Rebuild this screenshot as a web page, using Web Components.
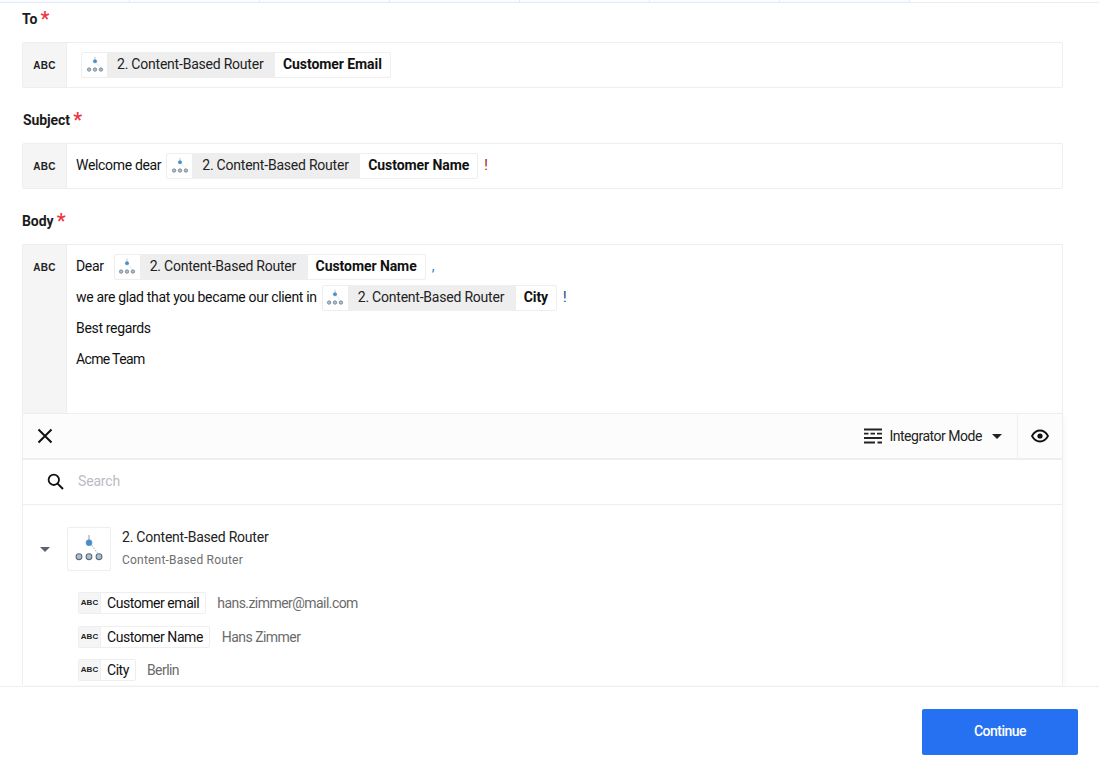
<!DOCTYPE html>
<html>
<head>
<meta charset="utf-8">
<style>
	html, body { margin: 0; padding: 0; background: #fff; }
	body { font-family: Roboto, "Liberation Sans", sans-serif; font-size: 14px; color: #111; }
</style>
</head>
<body>
<wizard-page>
	<top-strip></top-strip>
	<form-field label="To" style="--label-left:0px;--label-top:8px;--label-h:39px">
		<text-line style="padding-left:5px"><var-pill name="Customer Email"></var-pill></text-line>
	</form-field>
	<form-field label="Subject" style="--label-left:1px;--label-top:24px;--label-h:55px">
		<text-line>Welcome dear<var-pill name="Customer Name" style="margin-left:5px"></var-pill><span style="color:#a01020;margin-left:6px">!</span></text-line>
	</form-field>
	<form-field label="Body" tall style="--label-top:24px;--label-h:55px">
		<text-line>Dear<var-pill name="Customer Name" style="margin-left:10px"></var-pill><span style="color:#2a7fd0;margin-left:6px">,</span></text-line>
		<text-line>we are glad that you became our client in<var-pill name="City" style="margin-left:5px"></var-pill><span style="color:#123a80;margin-left:6px">!</span></text-line>
		<text-line>Best regards</text-line>
		<text-line style="letter-spacing:-.65px">Acme Team</text-line>
	</form-field>
	<picker-panel>
		<picker-toolbar></picker-toolbar>
		<picker-search></picker-search>
		<step-tree title="2. Content-Based Router" sub="Content-Based Router">
			<var-row name="Customer email" value="hans.zimmer@mail.com" style="--value-gap:11px"></var-row>
			<var-row name="Customer Name" value="Hans Zimmer" style="--value-gap:12px"></var-row>
			<var-row name="City" value="Berlin" style="--value-gap:11px"></var-row>
		</step-tree>
	</picker-panel>
	<wizard-footer slot="footer"></wizard-footer>
</wizard-page>

<script>
	// same drawing for the small pill icon and the big tree icon, only the size differs
	const routerSvg = (size) => `
		<svg width="${size}" height="${size}" viewBox="0 0 44 44" style="display:block;flex:none">
			<path d="M22 8V13" stroke="#bcc3ca" stroke-width="1.6" fill="none"/>
			<path d="M24.5 18L30.5 26" stroke="#c5ccd4" stroke-width="1.2" stroke-dasharray="2 1" fill="none"/>
			<circle cx="22" cy="15.7" r="3" fill="#3f8fd6" stroke="#6f8fa8" stroke-width=".7"/>
			<circle cx="12" cy="29.7" r="2.9" fill="#a9c0d3" stroke="#5f6b76" stroke-width="1.1"/>
			<circle cx="22" cy="29.7" r="2.9" fill="#a9c0d3" stroke="#5f6b76" stroke-width="1.1"/>
			<circle cx="32" cy="29.7" r="2.9" fill="#a9c0d3" stroke="#5f6b76" stroke-width="1.1"/>
		</svg>`;

	class WizardPage extends HTMLElement {
		constructor() {
			super();
			this.attachShadow({mode: "open"}).innerHTML = `
				<style>
					:host { display: flex; flex-direction: column; height: 776px; overflow: hidden; }
					.scroll { flex: 1; min-height: 0; overflow: hidden; padding: 0 36px 0 22px; }
					.foot { flex: none; }
				</style>
				<div class="top"><slot name="top"></slot></div>
				<div class="scroll"><slot></slot></div>
				<div class="foot"><slot name="footer"></slot></div>`;
			this.querySelector("top-strip").slot = "top";
		}
	}

	class TopStrip extends HTMLElement {
		constructor() {
			super();
			this.attachShadow({mode: "open"}).innerHTML = `
				<style>
					:host { display: flex; height: 3px; box-sizing: border-box; border-bottom: 1px solid #ececec; }
					i { width: 130px; height: 3px; box-sizing: border-box; background: #fbfcff; border-bottom: 1px solid #dfe9f9; border-right: 1px solid #e3ebf7; }
				</style>
				${"<i></i>".repeat(7)}`;
		}
	}

	class FormField extends HTMLElement {
		constructor() {
			super();
			const tall = this.hasAttribute("tall");
			this.attachShadow({mode: "open"}).innerHTML = `
				<style>
					:host { display: block; }
					.label { height: var(--label-h); box-sizing: border-box; padding: var(--label-top) 0 0 var(--label-left, 0); font-weight: 700; font-size: 14px; line-height: 16px; letter-spacing: -.1px; color: #1c1c1c; }
					.label b { color: #f0323c; font-size: 20px; font-weight: 500; line-height: 12px; vertical-align: -2px; }
					.box { display: flex; height: ${tall ? 169 : 46}px; box-sizing: border-box; border: 1px solid #eee; border-radius: 2px; ${tall ? "border-bottom: 0;" : ""} }
					.abc { width: 43px; flex: none; background: #f5f5f5; border-right: 1px solid #eee; font: 700 10px/16px "Liberation Sans", Arial, sans-serif; letter-spacing: .3px; text-align: center; padding-top: 15px; color: #222; }
					.body { flex: 1; padding: 6px 8px 0 9px; }
				</style>
				<div class="label">${this.getAttribute("label")} <b>*</b></div>
				<div class="box">
					<div class="abc">ABC</div>
					<div class="body"><slot></slot></div>
				</div>`;
		}
	}

	class TextLine extends HTMLElement {
		constructor() {
			super();
			this.attachShadow({mode: "open"}).innerHTML = `
				<style>
					:host { display: flex; align-items: center; height: 31px; box-sizing: border-box; padding-bottom: 2px; white-space: pre; color: #111; letter-spacing: -.33px; }
					::slotted(var-pill) { margin-bottom: -2px; }
				</style>
				<slot></slot>`;
		}
	}

	class VarPill extends HTMLElement {
		constructor() {
			super();
			this.attachShadow({mode: "open"}).innerHTML = `
				<style>
					:host { display: inline-flex; height: 26px; box-sizing: border-box; border: 1px solid #eee; border-radius: 2px; line-height: 23px; background: #fff; letter-spacing: 0; }
					.ic { width: 25px; display: flex; align-items: center; justify-content: center; }
					.step { background: #eee; padding: 0 11.5px 0 10px; color: #222; letter-spacing: -.22px; }
					.name { padding: 0 8px; font-weight: 700; color: #111; letter-spacing: -.07px; }
				</style>
				<div class="ic">${routerSvg(26)}</div>
				<div class="step">2. Content-Based Router</div>
				<div class="name">${this.getAttribute("name")}</div>`;
		}
	}

	class PickerPanel extends HTMLElement {
		constructor() {
			super();
			this.attachShadow({mode: "open"}).innerHTML = `
				<style>
					:host { display: block; border: 1px solid #eee; border-bottom: 0; box-shadow: 2px 2px 6px rgba(0,0,0,.03); height: 272px; box-sizing: border-box; }
				</style>
				<slot></slot>`;
		}
	}

	class PickerToolbar extends HTMLElement {
		constructor() {
			super();
			this.attachShadow({mode: "open"}).innerHTML = `
				<style>
					:host { display: flex; align-items: center; height: 46px; box-sizing: border-box; background: #fcfcfc; border-bottom: 2px solid #eee; }
					.close { width: 44px; display: flex; justify-content: center; }
					.mode { margin-left: auto; display: flex; align-items: center; color: #222; letter-spacing: -.47px; }
					.mode span { margin: 0 10px 0 7px; }
					.caret { width: 0; height: 0; border: 5px solid transparent; border-top-color: #222; border-bottom: 0; margin-right: 15px; }
					.eye { width: 44px; height: 44px; border-left: 1px solid #eee; display: flex; align-items: center; justify-content: center; }
				</style>
				<div class="close">
					<svg width="16" height="16" viewBox="0 0 16 16"><path d="M1.5 1.5L14.5 14.5M14.5 1.5L1.5 14.5" stroke="#111" stroke-width="2" fill="none"/></svg>
				</div>
				<div class="mode">
					<svg width="18" height="16" viewBox="0 0 18 16">
						<path d="M0 1.5H18M0 5.7H4.5M6.5 5.7H11M13 5.7H18M0 10H18M0 14.5H11M13.5 14.5H18" stroke="#222" stroke-width="1.8" fill="none"/>
					</svg>
					<span>Integrator Mode</span>
					<i class="caret"></i>
				</div>
				<div class="eye">
					<svg width="18" height="14" viewBox="0 0 18 14"><path d="M1 7C3 3.4 5.8 1.5 9 1.5S15 3.4 17 7C15 10.6 12.2 12.5 9 12.5S3 10.6 1 7Z" fill="none" stroke="#111" stroke-width="1.8"/><circle cx="9" cy="7" r="2.6" fill="#111"/></svg>
				</div>`;
		}
	}

	class PickerSearch extends HTMLElement {
		constructor() {
			super();
			this.attachShadow({mode: "open"}).innerHTML = `
				<style>
					:host { display: flex; align-items: center; height: 45px; box-sizing: border-box; border-bottom: 1px solid #eee; padding: 0 0 2px 24px; color: #b9bcc2; letter-spacing: -.17px; }
					svg { margin-right: 14px; }
				</style>
				<svg width="17" height="17" viewBox="0 0 17 17"><circle cx="6.8" cy="6.8" r="5.2" fill="none" stroke="#111" stroke-width="1.8"/><path d="M10.6 10.6L16 16" stroke="#111" stroke-width="2" fill="none"/></svg>
				<span>Search</span>`;
		}
	}

	class StepTree extends HTMLElement {
		constructor() {
			super();
			this.attachShadow({mode: "open"}).innerHTML = `
				<style>
					:host { display: block; padding: 22px 0 0 17px; }
					.head { display: flex; align-items: center; }
					.caret { width: 0; height: 0; border: 5px solid transparent; border-top-color: #5c6370; border-bottom: 0; margin-right: 17px; }
					.ic { width: 44px; height: 44px; box-sizing: border-box; border: 1px solid #eee; border-radius: 2px; display: flex; align-items: center; justify-content: center; margin-right: 11px; }
					.text { margin-top: -4px; }
					.title { line-height: 20px; color: #222; letter-spacing: -.22px; }
					.sub { font-size: 12px; line-height: 16px; margin-top: 5px; color: #6e6e6e; letter-spacing: .2px; }
					.rows { padding: 21px 0 0 38px; display: flex; flex-direction: column; }
				</style>
				<div class="head">
					<i class="caret"></i>
					<div class="ic">${routerSvg(44)}</div>
					<div class="text">
						<div class="title">${this.getAttribute("title")}</div>
						<div class="sub">${this.getAttribute("sub")}</div>
					</div>
				</div>
				<div class="rows"><slot></slot></div>`;
		}
	}

	class VarRow extends HTMLElement {
		constructor() {
			super();
			this.attachShadow({mode: "open"}).innerHTML = `
				<style>
					:host { display: flex; align-items: center; height: 22px; margin-bottom: 11.5px; letter-spacing: -.45px; }
					.chip { display: flex; height: 22px; box-sizing: border-box; border: 1px solid #eee; border-radius: 2px; line-height: 20px; }
					.abc { width: 21px; background: #f5f5f5; border-right: 1px solid #eee; font: 700 8px/20px "Liberation Sans", Arial, sans-serif; letter-spacing: 0; text-align: center; color: #222; }
					.name { padding: 0 6px; color: #111; }
					.value { margin-left: var(--value-gap); color: #6b6b6b; letter-spacing: -.55px; }
				</style>
				<div class="chip"><div class="abc">ABC</div><div class="name">${this.getAttribute("name")}</div></div>
				<div class="value">${this.getAttribute("value")}</div>`;
		}
	}

	class WizardFooter extends HTMLElement {
		constructor() {
			super();
			this.attachShadow({mode: "open"}).innerHTML = `
				<style>
					:host { display: flex; justify-content: flex-end; height: 90px; box-sizing: border-box; border-top: 1px solid #eee; padding: 22px 21px 0 0; background: #fff; }
					button { width: 156px; height: 46px; border: 0; border-radius: 2px; padding: 0 0 2px; background: #2671f2; color: #fff; font: 500 14px Roboto, sans-serif; letter-spacing: -.5px; }
				</style>
				<button>Continue</button>`;
		}
	}

	customElements.define("wizard-page", WizardPage);
	customElements.define("top-strip", TopStrip);
	customElements.define("form-field", FormField);
	customElements.define("text-line", TextLine);
	customElements.define("var-pill", VarPill);
	customElements.define("picker-panel", PickerPanel);
	customElements.define("picker-toolbar", PickerToolbar);
	customElements.define("picker-search", PickerSearch);
	customElements.define("step-tree", StepTree);
	customElements.define("var-row", VarRow);
	customElements.define("wizard-footer", WizardFooter);
</script>
</body>
</html>
